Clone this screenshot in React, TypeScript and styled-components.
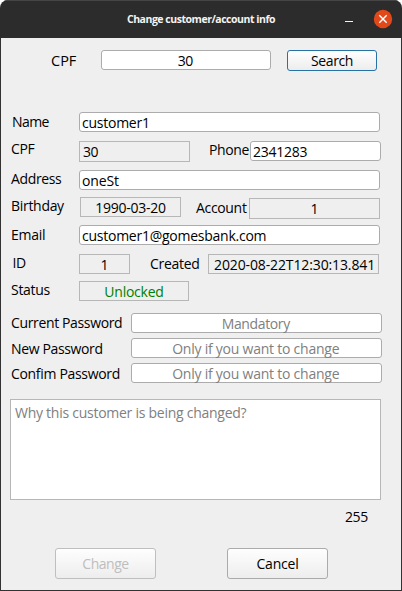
import React from 'react';
import styled, { createGlobalStyle } from 'styled-components';

const GlobalStyle = createGlobalStyle`
  * { box-sizing: border-box; }
  body { margin: 0; background: #fff; }
`;

const Window = styled.main`
  width: 402px;
  height: 591px;
  overflow: hidden;
  border-radius: 8px 8px 0 0;
  background: #efefef;
  color: #000;
  font: 14px/20px "Open Sans", "Noto Sans", sans-serif;
  white-space: nowrap;
`;

const TitleBar = styled.header`
  display: grid;
  grid-template-columns: 1fr auto 1fr;
  align-items: center;
  height: 38px;
  padding-bottom: 1px;
  border-top: 1px solid #454545;
  background: #2c2c2c;
`;

const Title = styled.h1`
  grid-column: 2;
  margin: 0;
  color: #f4f4f4;
  font-size: 10.5px;
  line-height: 16px;
  font-weight: 700;
  letter-spacing: -0.47px;
`;

const WindowControls = styled.div`
  display: flex;
  justify-content: flex-end;
  padding-right: 9px;
`;

const Body = styled.div`
  height: 553px;
  box-shadow: inset 1px 0 #323232, inset -1px 0 #323232, inset 0 -1px #323232;
  overflow: hidden;
`;

const Row = styled.div<{ $gap: number; $height?: number }>`
  display: flex;
  align-items: flex-start;
  height: ${p => p.$height ?? 20}px;
  margin-top: ${p => p.$gap}px;
`;

const Label = styled.span<{ $indent: number; $width: number; $spacing?: number; $shift?: number; $size?: number }>`
  flex: none;
  width: ${p => p.$width}px;
  padding-left: ${p => p.$indent}px;
  margin-top: ${p => p.$shift ?? 0}px;
  font-size: ${p => p.$size ?? 14}px;
  letter-spacing: ${p => p.$spacing ?? -0.38}px;
`;

const Field = styled.div<{ $width: number; $spacing?: number; $center?: boolean; $hint?: boolean; $inset?: number }>`
  flex: none;
  width: ${p => p.$width}px;
  height: 20px;
  padding: ${p => (p.$center ? '0 1.5px 0 0' : `0 0 0 ${p.$inset ?? 2}px`)};
  border: 1px solid #acacac;
  border-radius: 3px;
  background: #fff;
  color: ${p => (p.$hint ? '#808080' : '#000')};
  text-align: ${p => (p.$center ? 'center' : 'left')};
  letter-spacing: ${p => p.$spacing ?? -0.25}px;
`;

const ReadOnly = styled(Field)<{ $height?: number; $offset?: number; $color?: string }>`
  height: ${p => p.$height ?? 20}px;
  margin-top: ${p => p.$offset ?? 0}px;
  padding-right: 0;
  border-color: #b7b7b7;
  border-radius: 0;
  background: #efefef;
  color: ${p => p.$color ?? '#000'};
`;

const Button = styled.button<{ $left: number; $width: number; $spacing: number; $primary?: boolean }>`
  flex: none;
  width: ${p => p.$width}px;
  height: 100%;
  margin: 0 0 0 ${p => p.$left}px;
  padding: 0;
  border: 1px solid ${p => (p.$primary ? '#2672a4' : '#ababab')};
  border-radius: 3px;
  background: linear-gradient(#fefefe, #ededed);
  color: #000;
  font: inherit;
  letter-spacing: ${p => p.$spacing}px;

  &:disabled {
    border-color: #bfbfbf;
    color: #bebebe;
  }
`;

const Reason = styled.div`
  width: 371px;
  height: 101px;
  margin: 16px 0 0 10px;
  padding: 3px 4px;
  border: 1px solid #b7b7b7;
  background: #fff;
  color: #808080;
  letter-spacing: -0.26px;
`;

const passwords = [
  { label: 'Current Password', hint: 'Mandatory', gap: 12, shift: 0, labelSpacing: -0.36, spacing: -0.37 },
  { label: 'New Password', hint: 'Only if you want to change', gap: 5, shift: 1, labelSpacing: -0.36, spacing: -0.23 },
  { label: 'Confim Password', hint: 'Only if you want to change', gap: 5, shift: 1, labelSpacing: -0.32, spacing: -0.23 },
];

export default function App() {
  return (
    <Window>
      <GlobalStyle />
      <TitleBar>
        <Title>Change customer/account info</Title>
        <WindowControls>
          <svg width="50" height="20" viewBox="0 0 50 20" fill="none">
            <path d="M2 12.5h8" stroke="#f4f4f4" />
            <circle cx="40" cy="10" r="9.2" fill="#e2491a" />
            <path d="m36.3 6.3 7.4 7.4m0-7.4-7.4 7.4" stroke="#fff" strokeWidth="1.4" />
          </svg>
        </WindowControls>
      </TitleBar>
      <Body>
        <Row $gap={12} $height={21}>
          <Label $indent={51} $width={101} $size={14.5} $spacing={0} $shift={1}>CPF</Label>
          <Field $width={170} $center $spacing={-0.4}>30</Field>
          <Button $left={16} $width={90} $spacing={-0.35} $primary>Search</Button>
        </Row>
        <Row $gap={41}>
          <Label $indent={12} $width={79} $spacing={-0.59}>Name</Label>
          <Field $width={301} $spacing={-0.25}>customer1</Field>
        </Row>
        <Row $gap={9} $height={21}>
          <Label $indent={11} $width={79} $shift={-2}>CPF</Label>
          <ReadOnly $width={111} $height={21} $inset={3} $spacing={-0.4}>30</ReadOnly>
          <Label $indent={19} $width={60} $shift={-1}>Phone</Label>
          <Field $width={131}>2341283</Field>
        </Row>
        <Row $gap={8}>
          <Label $indent={11} $width={79} $shift={-1} $spacing={-0.36}>Address</Label>
          <Field $width={301} $spacing={-0.14}>oneSt</Field>
        </Row>
        <Row $gap={7} $height={22}>
          <Label $indent={11} $width={80} $shift={-1} $spacing={-0.3}>Birthday</Label>
          <ReadOnly $width={101} $center>1990-03-20</ReadOnly>
          <Label $indent={15} $width={68} $shift={1} $spacing={-0.33}>Account</Label>
          <ReadOnly $width={131} $height={21} $offset={1} $center>1</ReadOnly>
        </Row>
        <Row $gap={6}>
          <Label $indent={11} $width={79} $spacing={-0.26}>Email</Label>
          <Field $width={301}>customer1@gomesbank.com</Field>
        </Row>
        <Row $gap={9}>
          <Label $indent={12.6} $width={79} $shift={-1}>ID</Label>
          <ReadOnly $width={51} $center>1</ReadOnly>
          <Label $indent={20} $width={78} $spacing={-0.3}>Created</Label>
          <ReadOnly $width={171} $inset={5} $spacing={-0.12}>2020-08-22T12:30:13.841</ReadOnly>
        </Row>
        <Row $gap={7}>
          <Label $indent={11} $width={79} $shift={-1} $spacing={-0.3}>Status</Label>
          <ReadOnly $width={110} $center $color="#008000" $spacing={-0.24}>Unlocked</ReadOnly>
        </Row>
        {passwords.map(p => (
          <Row key={p.label} $gap={p.gap}>
            <Label $indent={11} $width={131} $shift={p.shift} $spacing={p.labelSpacing}>{p.label}</Label>
            <Field $width={251} $center $hint $spacing={p.spacing}>{p.hint}</Field>
          </Row>
        ))}
        <Reason>Why this customer is being changed?</Reason>
        <Row $gap={7}>
          <Label $indent={345} $width={380} $spacing={-0.4}>255</Label>
        </Row>
        <Row $gap={21} $height={31}>
          <Button $left={55} $width={101} $spacing={-0.47} disabled>Change</Button>
          <Button $left={71} $width={101} $spacing={-0.21}>Cancel</Button>
        </Row>
      </Body>
    </Window>
  );
}
